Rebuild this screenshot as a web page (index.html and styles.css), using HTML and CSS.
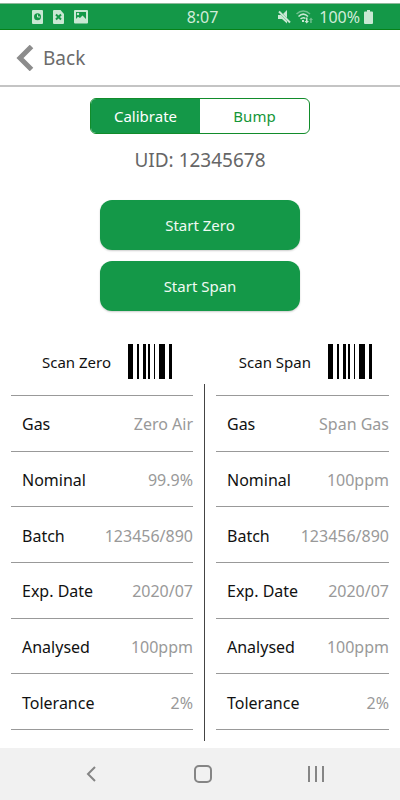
FILE: index.html
```html
<!DOCTYPE html>
<html lang="en">
<head>
<meta charset="utf-8">
<meta name="viewport" content="width=device-width, initial-scale=1">
<title>Calibrate</title>
<link rel="stylesheet" href="styles.css">
</head>
<body>
<svg class="defs" aria-hidden="true">
  <symbol id="barcode" viewBox="0 0 44 35"><path d="M0 0h5v35H0zM9 0h2v35H9zM15 0h3v35h-3zM20 0h2v35h-2zM26 0h1v35h-1zM31 0h6v35h-6zM41 0h3v35h-3z"/></symbol>
</svg>
<div class="screen">
  <div class="status">
    <div class="status-left">
      <svg width="11" height="14" viewBox="0 0 11 14"><rect width="11" height="14" rx="1"/><circle class="cut" cx="5.5" cy="6.8" r="3.5"/><path class="mark" d="M5.5 4.5V7H8"/></svg>
      <svg width="11" height="14" viewBox="0 0 11 14"><path d="M1 0h6.500L11 4v9a1 1 0 0 1-1 1H1a1 1 0 0 1-1-1V1a1 1 0 0 1 1-1z"/><path class="cutline" d="M3 4.500l5 5M8 4.500l-5 5"/></svg>
      <svg width="14" height="14" viewBox="0 0 14 14"><rect width="14" height="13.500" rx="1"/><path class="cut" d="M2 2h10v7L8.500 5.500 6 8 4 6.800 2 9z"/><circle cx="4" cy="4" r="1.200"/></svg>
    </div>
    <span>8:07</span>
    <div class="status-right">
      <svg width="13" height="14" viewBox="0 0 13 14"><path d="M0 5h3l6 6v2.500L4 9H0zM5 4l4-4v8z"/><path class="slash" d="M1 1.500l11 11"/></svg>
      <svg class="wifi" width="18" height="14" viewBox="0 0 18 14"><path class="faint" d="M0.500 4C4.500 0 10 0 14 4"/><path d="M2.500 6.500C5.500 3.500 9 3.500 12 6.500M4.500 9C6.500 7.300 8 7.300 9.500 8.500"/><path class="dot" d="M6 10h2v2H6zM10 7.500h1.500V11H13l-2.300 2.500L8.500 11H10z"/><path class="dot faint" d="M13 10l2-2.500L17 10h-1.300v3h-1.500v-3z"/></svg>
      <span>100%</span>
      <svg class="battery" width="9" height="14" viewBox="0 0 9 14"><path d="M3 0h3v1.500h2a1 1 0 0 1 1 1V13a1 1 0 0 1-1 1H1a1 1 0 0 1-1-1V2.500a1 1 0 0 1 1-1h2z"/></svg>
    </div>
  </div>

  <header class="bar">
    <a class="back" href="#">
      <svg width="18" height="26" viewBox="0 0 18 26"><path d="M15.500 1.500L4 13l11.500 11.500"/></svg>
      Back
    </a>
  </header>

  <main>
    <div class="tabs">
      <button class="tab active" type="button">Calibrate</button>
      <button class="tab" type="button">Bump</button>
    </div>
    <p class="uid">UID: 12345678</p>
    <div class="actions">
      <button class="action" type="button">Start Zero</button>
      <button class="action" type="button">Start Span</button>
    </div>
    <div class="scans">
      <button class="scan" type="button">Scan Zero <svg width="44" height="35"><use href="#barcode"/></svg></button>
      <button class="scan" type="button">Scan Span <svg width="44" height="35"><use href="#barcode"/></svg></button>
    </div>
    <div class="data">
      <table aria-label="Zero gas">
        <tr><th scope="row">Gas</th><td>Zero Air</td></tr>
        <tr><th scope="row">Nominal</th><td>99.9%</td></tr>
        <tr><th scope="row">Batch</th><td>123456/890</td></tr>
        <tr><th scope="row">Exp. Date</th><td>2020/07</td></tr>
        <tr><th scope="row">Analysed</th><td>100ppm</td></tr>
        <tr><th scope="row">Tolerance</th><td>2%</td></tr>
      </table>
      <div class="divider"></div>
      <table aria-label="Span gas">
        <tr><th scope="row">Gas</th><td>Span Gas</td></tr>
        <tr><th scope="row">Nominal</th><td>100ppm</td></tr>
        <tr><th scope="row">Batch</th><td>123456/890</td></tr>
        <tr><th scope="row">Exp. Date</th><td>2020/07</td></tr>
        <tr><th scope="row">Analysed</th><td>100ppm</td></tr>
        <tr><th scope="row">Tolerance</th><td>2%</td></tr>
      </table>
    </div>
  </main>

  <nav class="nav">
    <button type="button" aria-label="Back"><svg width="18" height="18" viewBox="0 0 18 18"><path d="M13 2L6 9l7 7"/></svg></button>
    <button type="button" aria-label="Home"><svg width="18" height="18" viewBox="0 0 18 18"><rect x="1" y="1" width="16" height="16" rx="4"/></svg></button>
    <button type="button" aria-label="Recent apps"><svg width="18" height="18" viewBox="0 0 18 18"><path d="M3 1v16M10 1v16M17 1v16"/></svg></button>
  </nav>
</div>
</body>
</html>
```
FILE: styles.css
```css
* { box-sizing: border-box; }

body {
  margin: 0;
  background: #fff;
  color: #111;
  font: 16px/24px "Noto Sans", sans-serif;
}

button {
  margin: 0;
  padding: 0;
  border: 0;
  background: none;
  color: inherit;
  font: inherit;
}

svg { display: block; flex: none; }

.defs { position: absolute; width: 0; height: 0; }

.screen {
  display: flex;
  flex-direction: column;
  min-height: 100vh;
  padding-top: 3px;
}

.status {
  display: grid;
  grid-template-columns: 1fr auto 1fr;
  align-items: center;
  height: 27px;
  padding: 0 27px 0 32px;
  border-top: 1px solid #8fb89b;
  border-bottom: 1px solid #078218;
  background: #149848;
  color: #d0ecd9;
}

.status svg { fill: #c9e8d3; }
.status .cut { fill: #149848; }
.status .mark { fill: none; stroke: #c9e8d3; }
.status .cutline { fill: none; stroke: #149848; stroke-width: 2; }
.status .slash { fill: none; stroke: #c9e8d3; stroke-width: 2; }
.status .wifi { fill: none; stroke: #c9e8d3; stroke-width: 1.5; }
.status .wifi .dot { fill: #c9e8d3; stroke: none; }
.status .faint { opacity: 0.5; }

.status-left { display: flex; gap: 10px; }
.status-right { display: flex; align-items: center; justify-content: flex-end; gap: 4px; }
.status-right .wifi { margin: 0 1px; }

.bar {
  display: flex;
  align-items: center;
  height: 57px;
  padding: 0 16px;
  border-bottom: 2px solid #c4c4c4;
}

.back {
  display: flex;
  align-items: center;
  gap: 9px;
  color: #6b6b6b;
  font-size: 19px;
  text-decoration: none;
}

.back svg { fill: none; stroke: #8c8c8c; stroke-width: 5; }

main { display: flex; flex: 1; flex-direction: column; padding-top: 11px; }

.tabs {
  display: grid;
  grid-template-columns: 1fr 1fr;
  align-self: center;
  width: 55%;
  height: 36px;
  overflow: hidden;
  border: 1px solid #128c2b;
  border-radius: 6px;
}

.tab { color: #149637; font-size: 15px; }
.tab.active { background: #149848; color: #fff; }

.uid {
  margin: 14px 0 28px;
  color: #666;
  font-size: 19px;
  text-align: center;
}

.actions { display: grid; gap: 11px; align-self: center; width: 50%; }

.action {
  height: 50px;
  border-radius: 12px;
  background: #149848;
  box-shadow: 0 1px 2px #0003;
  color: #f0faf3;
  font-size: 15px;
}

.scans { display: grid; grid-template-columns: 1fr 1fr; margin-top: 33px; }

.scan {
  display: flex;
  align-items: center;
  justify-content: flex-end;
  gap: 17px;
  padding-right: 28px;
  font-size: 15px;
}

.data {
  display: grid;
  flex: 1;
  grid-template-columns: 182fr 1px 173fr;
  column-gap: 11px;
  margin-top: 5px;
  padding: 0 11px;
}

table {
  width: 100%;
  height: 335px;
  margin: 11px 0;
  border-collapse: collapse;
  border-top: 1px solid #999;
}

tr { border-bottom: 1px solid #999; }
th, td { padding: 2px 0 0; }
th { padding-left: 11px; font-weight: 400; text-align: left; }
td { color: #999; text-align: right; }

.divider { background: #444; }

.nav {
  display: flex;
  align-items: center;
  justify-content: center;
  gap: 94px;
  height: 52px;
  margin-top: 7px;
  padding-left: 6px;
  background: #f1f1f1;
}

.nav svg { fill: none; stroke: #858585; stroke-width: 2; }
```
